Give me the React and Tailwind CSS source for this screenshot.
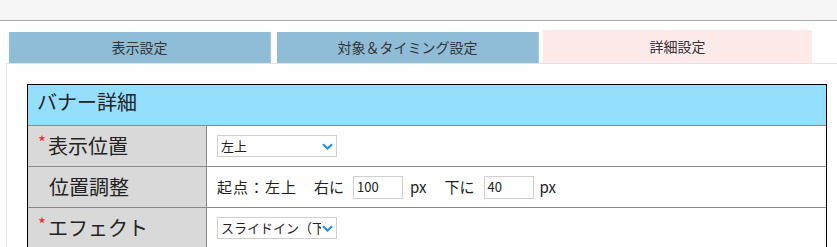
import React from "react";

const jp = { fontFamily: '"Meiryo", "Noto Sans CJK JP", "Noto Sans", sans-serif' };

const Chevron = () => (
  <svg width="11" height="7" viewBox="0 0 11 7" className="shrink-0">
    <path d="M1 1.2 L5.5 5.5 L10 1.2" fill="none" stroke="#1f8fe6" strokeWidth="2" />
  </svg>
);

const FakeSelect = ({ value }) => (
  <div className="relative flex h-[22px] w-[120px] items-center overflow-hidden border border-[#cfcfcf] bg-white pl-[3px] text-[13px] text-[#222]">
    <span className="whitespace-nowrap">{value}</span>
    <div className="absolute right-0 top-0 flex h-full items-center bg-white pl-[1px] pr-[3px]">
      <Chevron />
    </div>
  </div>
);

const NumInput = ({ value }) => (
  <div className="flex h-[23px] w-[50px] items-center border border-[#cfcfcf] bg-white pl-[3px] text-[13px] text-[#222]">
    {value}
  </div>
);

const Row = ({ label, required, children }) => (
  <div className="flex h-[41px] border-t border-[#8a8a8a]">
    <div className="flex w-[179px] items-center border-r border-[#8a8a8a] bg-[#d9d9d9] text-[20px] text-[#222]">
      {required ? (
        <>
          <span className="ml-[10px] w-[10px] self-start pt-[7px] text-[17px] leading-none text-[#e53030]">*</span>
          <span>{label}</span>
        </>
      ) : (
        <span className="ml-[21px]">{label}</span>
      )}
    </div>
    <div className="flex flex-1 items-center bg-white pl-[10px]">{children}</div>
  </div>
);

export default function App() {
  return (
    <div className="h-[247px] w-[837px] overflow-hidden bg-white" style={jp}>
      <div className="h-[21px] border-b border-[#aaaaaa] bg-[#f7f7f7]" />
      <div className="flex items-end pl-[9px] pt-[9px] text-[14px] text-[#333]">
        <div className="flex h-[31px] w-[262px] items-center justify-center border-r border-[#a8cde2] bg-[#8fbdd8]">表示設定</div>
        <div className="ml-[6px] flex h-[31px] w-[262px] items-center justify-center border-r border-[#a8cde2] bg-[#8fbdd8]">対象＆タイミング設定</div>
        <div className="ml-[4px] flex h-[33px] w-[269px] items-center justify-center bg-[#ffeaea]">詳細設定</div>
      </div>
      <div className="ml-[6px] border-l border-t border-[#e2e2e2] pl-[20px] pr-[10px] pt-[20px]">
        <div className="border border-black">
          <div className="flex h-[40px] items-center bg-[#94dffe] pb-[6px] pl-[9px] text-[20px] text-[#222]">
            バナー詳細
          </div>
          <Row label="表示位置" required>
            <FakeSelect value="左上" />
          </Row>
          <Row label="位置調整">
            <div className="flex items-center text-[15px] text-[#222]">
              <span className="tracking-[1px]">起点：左上</span>
              <span className="ml-[17px]">右に</span>
              <div className="ml-[9px]"><NumInput value="100" /></div>
              <span className="ml-[7px]">px</span>
              <span className="ml-[18px]">下に</span>
              <div className="ml-[9px]"><NumInput value="40" /></div>
              <span className="ml-[6px]">px</span>
            </div>
          </Row>
          <Row label="エフェクト" required>
            <FakeSelect value="スライドイン（下から）" />
          </Row>
        </div>
      </div>
    </div>
  );
}
